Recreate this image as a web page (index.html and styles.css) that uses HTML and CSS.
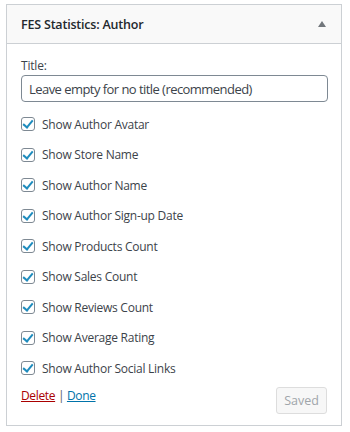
FILE: index.html
```html
<!DOCTYPE html>
<html lang="en">
<head>
  <meta charset="UTF-8">
  <title>FES Statistics: Author</title>
  <link rel="stylesheet" href="styles.css">
</head>
<body>

  <div class="widget">
    <div class="widget-top">
      <h3 class="widget-title">FES Statistics: Author</h3>
      <span class="toggle-arrow"></span>
    </div>

    <div class="widget-inside">
      <label class="field-label" for="title">Title:</label>
      <input class="text-input" id="title" type="text" value="Leave empty for no title (recommended)">

      <div class="options">
        <label class="option"><input type="checkbox" checked><span>Show Author Avatar</span></label>
        <label class="option"><input type="checkbox" checked><span>Show Store Name</span></label>
        <label class="option"><input type="checkbox" checked><span>Show Author Name</span></label>
        <label class="option"><input type="checkbox" checked><span>Show Author Sign-up Date</span></label>
        <label class="option"><input type="checkbox" checked><span>Show Products Count</span></label>
        <label class="option"><input type="checkbox" checked><span>Show Sales Count</span></label>
        <label class="option"><input type="checkbox" checked><span>Show Reviews Count</span></label>
        <label class="option"><input type="checkbox" checked><span>Show Average Rating</span></label>
        <label class="option"><input type="checkbox" checked><span>Show Author Social Links</span></label>
      </div>

      <div class="widget-actions">
        <div class="links">
          <a href="#" class="delete-link">Delete</a> | <a href="#" class="done-link">Done</a>
        </div>
        <button class="save-btn" disabled>Saved</button>
      </div>
    </div>
  </div>

</body>
</html>
```

FILE: styles.css
```css
body {
  margin: 0;
  background: #fff;
  font-family: 'Open Sans', 'Noto Sans', sans-serif;
  font-size: 12px;
  color: #3c434a;
}

.widget {
  margin: 4px 8px 0 6px;
  border: 1px solid #ccd0d4;
  height: 422px;
  box-sizing: border-box;
}

.widget-top {
  display: flex;
  align-items: center;
  justify-content: space-between;
  height: 38px;
  padding: 0 15px 0 14px;
  background: #f9f9f9;
  border-bottom: 1px solid #ccd0d4;
}

.widget-title {
  margin: 0;
  font-size: 12.5px;
  font-weight: 600;
  color: #23282d;
  letter-spacing: -0.2px;
}

.toggle-arrow {
  width: 0;
  height: 0;
  border-left: 4px solid transparent;
  border-right: 4px solid transparent;
  border-bottom: 6px solid #72777c;
}

.widget-inside {
  padding: 13px 14px 0;
}

.field-label {
  display: block;
  line-height: 18px;
  font-size: 12px;
  letter-spacing: -0.2px;
}

.text-input {
  display: block;
  box-sizing: border-box;
  width: 307px;
  height: 27px;
  margin: 0;
  padding: 0 7px;
  border: 1px solid #7e8993;
  border-radius: 4px;
  font-family: inherit;
  font-size: 13px;
  letter-spacing: -0.55px;
  color: #3c434a;
}

.options {
  margin-top: 7px;
}

.option {
  display: flex;
  align-items: center;
  height: 30.5px;
  font-size: 12px;
  letter-spacing: -0.25px;
}

.option input {
  appearance: none;
  width: 14px;
  height: 14px;
  margin: 0 7px 0 0;
  border: 1px solid #7e8993;
  border-radius: 3px;
  background: #fff;
  position: relative;
}

.option input:checked::before {
  content: "";
  position: absolute;
  left: 3px;
  top: 0px;
  width: 4px;
  height: 8px;
  border: solid #1e8cbe;
  border-width: 0 2.5px 2.5px 0;
  transform: rotate(40deg);
}

.widget-actions {
  display: flex;
  justify-content: space-between;
  align-items: flex-start;
  margin-top: 3px;
}

.links {
  line-height: 18px;
  font-size: 12px;
  letter-spacing: -0.35px;
  color: #555d66;
}

.delete-link {
  color: #a00;
}

.done-link {
  color: #0073aa;
}

.save-btn {
  width: 51px;
  height: 27px;
  margin-top: 0;
  padding: 0;
  border: 1px solid #ddd;
  border-radius: 3px;
  background: #f7f7f7;
  color: #a0a5aa;
  font-family: inherit;
  font-size: 12.5px;
}
```
